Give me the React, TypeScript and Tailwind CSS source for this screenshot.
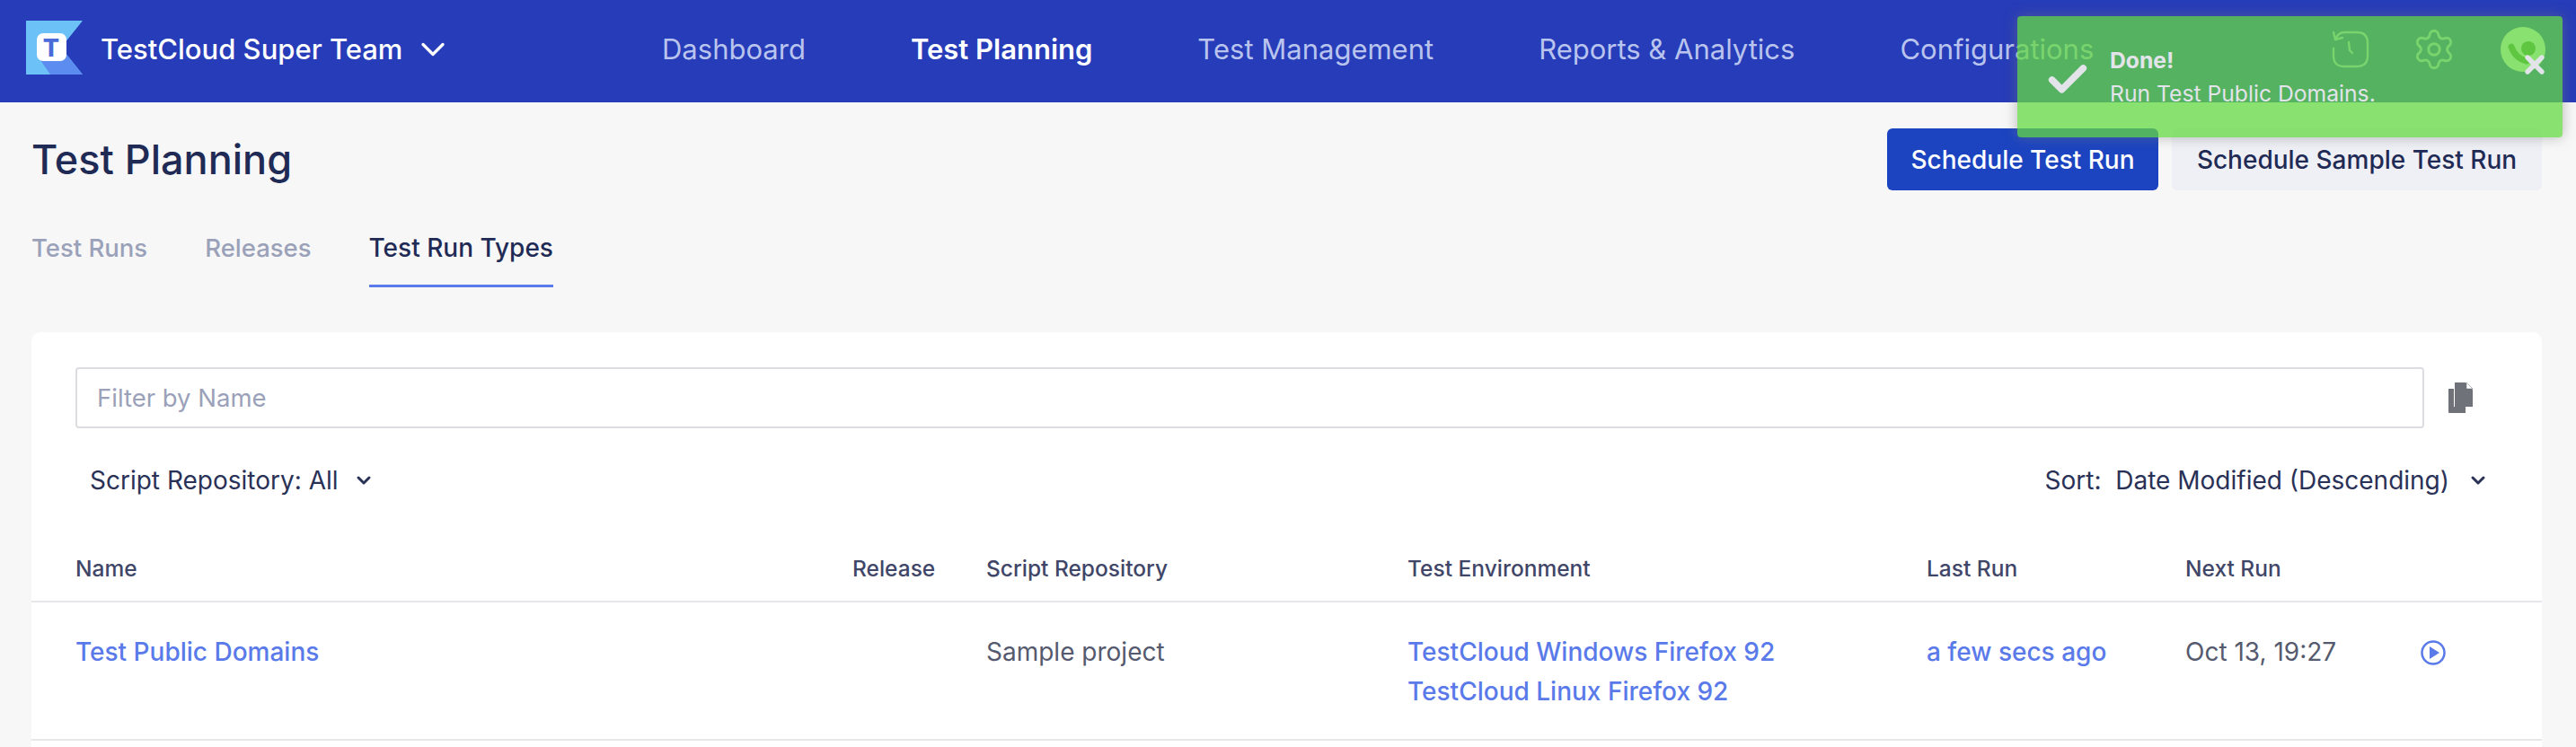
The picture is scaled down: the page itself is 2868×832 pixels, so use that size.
import { ChevronDown, Check, Settings, X } from "lucide-react";

const navItems = ["Dashboard", "Test Planning", "Test Management", "Reports & Analytics", "Configurations"];

function Logo() {
  return (
    <svg width="63" height="60" viewBox="0 0 63 60" className="mb-[4px] shrink-0">
      <polygon points="0,0 63,0 39,30 63,60 0,60" fill="#6cc1f6" />
      <polygon points="16,44 39,30 63,60 27,60" fill="#5d8cf0" />
      <rect x="12" y="14" width="33" height="31" rx="7" fill="#ffffff" />
      <text x="28" y="40" textAnchor="middle" fontSize="27" fontWeight="800" fontFamily="Inter, sans-serif" fill="#4a6bd8">
        T
      </text>
    </svg>
  );
}

function Avatar() {
  return (
    <svg width="50" height="50" viewBox="0 0 50 50">
      <circle cx="25" cy="25" r="25" fill="#f5f5f5" />
      <path d="M12 22c3 9 9 14 17 16" fill="none" stroke="#4f8a3c" strokeWidth="7" strokeLinecap="round" />
      <circle cx="31" cy="24" r="8" fill="#4f8a3c" />
    </svg>
  );
}

function ClockSquare() {
  return (
    <svg width="42" height="44" viewBox="0 0 42 44" fill="none" stroke="currentColor" strokeWidth="2.4" strokeLinecap="round" strokeLinejoin="round">
      <path d="M2 3l2 8 8-2" />
      <path d="M4 11c2-5 5-8 10-8h14c8 0 12 4 12 12v14c0 8-4 12-12 12H14c-8 0-12-4-12-12V21" />
      <path d="M19 14l1 9 3 3" />
    </svg>
  );
}

function CopyDocs() {
  return (
    <svg width="28" height="34" viewBox="0 0 28 34" className="ml-[26px]">
      <path d="M1 7h6v20h13v7H2a1 1 0 0 1-1-1z" fill="#6f7278" />
      <path d="M8 0h12l8 8v19H8z" fill="#6f7278" />
      <path d="M21 0l7 7h-7z" fill="#ffffff" stroke="#6f7278" strokeWidth="0.5" />
    </svg>
  );
}

export default function App() {
  return (
    <div className="relative h-[832px] w-[2868px] overflow-hidden bg-[#f7f7f8] font-['Inter',sans-serif]">
      <header className="flex h-[114px] items-center bg-[#273cb8] pb-[4px] pl-[29px] pr-[34px]">
        <div className="flex w-[708px] items-center">
          <Logo />
          <span className="ml-[20px] text-[31px] font-medium text-white">TestCloud Super Team</span>
          <ChevronDown className="ml-[12px] h-[44px] w-[44px] text-white" strokeWidth={1.8} />
        </div>
        <nav className="flex items-center gap-[117px] text-[31px] text-[#b9c4ee]">
          {navItems.map((item) => (
            <span key={item} className={item === "Test Planning" ? "font-semibold text-white" : ""}>
              {item}
            </span>
          ))}
        </nav>
        <div className="ml-auto flex items-center text-[#b9c4ee]">
          <ClockSquare />
          <Settings className="ml-[47px] h-[50px] w-[50px]" strokeWidth={1.4} />
          <div className="ml-[49px]">
            <Avatar />
          </div>
        </div>
      </header>

      <div className="flex items-center justify-between pl-[35px] pr-[38px] pt-[29px]">
        <h1 className="text-[45px] font-medium text-[#1f2a55]">Test Planning</h1>
        <div className="flex gap-[15px] text-[28px] font-medium">
          <button className="h-[69px] w-[302px] rounded-[6px] bg-[#1c44c0] text-white">Schedule Test Run</button>
          <button className="h-[69px] w-[412px] rounded-[6px] bg-[#eff0f5] text-[#1f2a55]">Schedule Sample Test Run</button>
        </div>
      </div>

      <div className="flex items-end gap-[64px] pl-[35px] pt-[43px] text-[27.5px] font-medium text-[#9aa1b8]">
        <span className="pb-[23px]">Test Runs</span>
        <span className="pb-[23px]">Releases</span>
        <span className="border-b-[3px] border-[#5a7aea] pb-[20px] text-[28px] text-[#1f2a55]">Test Run Types</span>
      </div>

      <main className="ml-[35px] mr-[38px] mt-[50px] rounded-t-[10px] bg-white pb-[20px]">
        <div className="flex items-center pl-[49px] pt-[39px]">
          <input
            placeholder="Filter by Name"
            className="h-[68px] w-[2615px] rounded-[4px] border-2 border-[#dcdde1] px-[22px] text-[27.5px] placeholder:text-[#9aa1b8]"
          />
          <CopyDocs />
        </div>
        <div className="flex items-center justify-between pl-[65px] pr-[59px] pt-[37px] text-[28px] text-[#2a3157]">
          <div className="flex items-center gap-[16px]">
            <span>Script Repository: All</span>
            <ChevronDown className="h-[24px] w-[24px]" strokeWidth={3} />
          </div>
          <div className="flex items-center gap-[20px]">
            <span>Sort:&nbsp; Date Modified (Descending)</span>
            <ChevronDown className="h-[24px] w-[24px]" strokeWidth={3} />
          </div>
        </div>
        <div className="mt-[59px] grid h-[56px] grid-cols-[865px_149px_469px_578px_288px_261px] border-b-2 border-[#e6e7ea] pl-[49px] text-[24.5px] font-medium text-[#3f4668]">
          <span>Name</span>
          <span>Release</span>
          <span>Script Repository</span>
          <span>Test Environment</span>
          <span>Last Run</span>
          <span>Next Run</span>
        </div>
        <div className="grid h-[154px] grid-cols-[865px_149px_469px_578px_288px_261px_auto] border-b-2 border-[#e6e7ea] pl-[49px] pt-[33px] text-[28px] leading-[44px]">
          <span className="font-medium text-[#5a7aea]">Test Public Domains</span>
          <span />
          <span className="text-[#555a6e]">Sample project</span>
          <div className="font-medium text-[#5a7aea]">
            <div>TestCloud Windows Firefox 92</div>
            <div>TestCloud Linux Firefox 92</div>
          </div>
          <span className="font-medium text-[#5a7aea]">a few secs ago</span>
          <span className="text-[#555a6e]">Oct 13, 19:27</span>
          <svg width="30" height="30" viewBox="0 0 30 30" className="mt-[8px]">
            <circle cx="15" cy="15" r="12.5" fill="none" stroke="#5a7aea" strokeWidth="2.5" />
            <polygon points="11,8 22,15 11,22" fill="#5a7aea" />
          </svg>
        </div>
      </main>

      <div className="absolute left-[2246px] top-[18px] flex h-[135px] w-[607px] rounded-[4px] bg-[#64da43]/75 pl-[30px] pt-[31px] shadow-[0_0_14px_rgba(120,120,120,0.5)] text-[#e2e4ea]">
        <Check className="mt-[14px] h-[52px] w-[52px]" strokeWidth={3.5} />
        <div className="ml-[21px] text-[24.7px] leading-[37px]">
          <div className="font-bold">Done!</div>
          <div>Run Test Public Domains.</div>
        </div>
        <X className="absolute right-[15px] top-[38px] h-[32px] w-[32px]" strokeWidth={4} />
      </div>
    </div>
  );
}
